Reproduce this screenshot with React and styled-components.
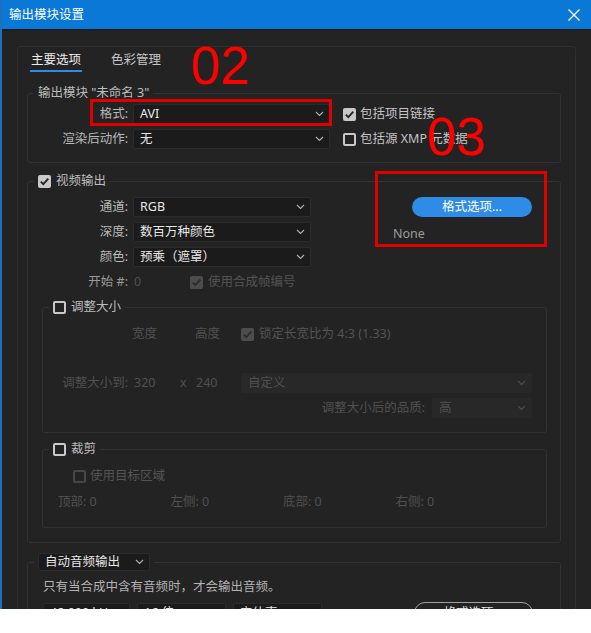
import React from 'react';
import styled, { createGlobalStyle } from 'styled-components';

const GlobalStyle = createGlobalStyle`
  html, body {
    margin: 0;
    padding: 0;
    background: #ffffff;
  }
  body {
    font-family: "Noto Sans", "Noto Sans CJK SC", sans-serif;
  }
  * {
    box-sizing: border-box;
  }
`;

const Window = styled.div`
  width: 591px;
  height: 609px;
  overflow: hidden;
  background: #232323;
  border-left: 2px solid #1f6fbf;
  display: flex;
  flex-direction: column;
  color: #bababa;
  font-size: 12.5px;
  line-height: 16px;
`;

const TitleBar = styled.div`
  height: 31px;
  flex-shrink: 0;
  background: #0a78d7;
  border-bottom: 2px solid #1b1b1b;
  display: flex;
  align-items: center;
  justify-content: space-between;
  padding: 0 11px 0 7px;
  color: #ffffff;
`;

const Body = styled.div`
  position: relative;
  flex: 1;
  padding: 15px 15px 0 15px;
`;

const Panel = styled.div`
  border: 1px solid #303030;
  border-radius: 3px;
  padding: 0 14px 0 9px;
`;

const TabBar = styled.div`
  display: flex;
  gap: 28px;
  padding-left: 3px;
`;

const Tab = styled.div`
  padding: 5px 1px 2px;
  border-bottom: 2px solid ${(p) => (p.$active ? '#2d8ceb' : 'transparent')};
  color: ${(p) => (p.$active ? '#ececec' : '#c6c6c6')};
`;

const Group = styled.fieldset`
  margin: ${(p) => p.$mt || 0}px 0 0;
  padding: 0;
  border: 1px solid #323232;
  border-radius: 3px;
  min-width: 0;
`;

const Legend = styled.legend`
  margin-left: 6px;
  padding: 0 4px;
`;

const LegendInner = styled.span`
  display: flex;
  align-items: center;
  gap: 5px;
  height: ${(p) => p.$h || 16}px;
  color: #bdbdbd;
`;

const Select = styled.div`
  height: ${(p) => p.$h || 20}px;
  width: ${(p) => (p.$w ? `${p.$w}px` : 'auto')};
  background: ${(p) => (p.$disabled ? '#282828' : '#1b1b1b')};
  border: 1px solid ${(p) => (p.$disabled ? '#282828' : '#2b2b2b')};
  border-radius: 2px;
  display: flex;
  align-items: center;
  justify-content: space-between;
  padding: 0 5px 0 6px;
  color: ${(p) => (p.$disabled ? '#505050' : '#e6e6e6')};
  white-space: nowrap;
`;

const ModuleGrid = styled.div`
  position: relative;
  display: grid;
  grid-template-columns: 105px 197px 1fr;
  grid-auto-rows: 20px;
  row-gap: 5px;
  padding: 3px 0 13px;
  align-items: center;
`;

const Label = styled.span`
  text-align: right;
  padding-right: 5px;
  color: ${(p) => p.$color || '#b9b9b9'};
  white-space: nowrap;
`;

const CheckCell = styled.div`
  padding-left: 13px;
`;

const CheckRow = styled.label`
  display: flex;
  align-items: center;
  gap: ${(p) => p.$gap || 4}px;
  color: ${(p) => (p.$disabled ? '#535353' : '#c4c4c4')};
  white-space: nowrap;
`;

const Box = styled.span`
  width: 13px;
  height: 13px;
  border-radius: 2px;
  flex-shrink: 0;
  display: inline-flex;
  align-items: center;
  justify-content: center;
  background: ${(p) => (p.$checked ? (p.$disabled ? '#4c4c4c' : '#c9c9c9') : 'transparent')};
  border: ${(p) => (p.$checked ? 'none' : `2px solid ${p.$disabled ? '#474747' : '#c9c9c9'}`)};
`;

const RedBox = styled.div`
  position: absolute;
  border: 3px solid #e00000;
  pointer-events: none;
`;

const BigNumber = styled.div`
  position: absolute;
  font-family: "Liberation Sans", Arial, sans-serif;
  font-size: 53px;
  line-height: 53px;
  color: #ff0000;
  pointer-events: none;
`;

const VideoTop = styled.div`
  display: flex;
  padding-top: 8px;
`;

const VideoForm = styled.div`
  display: grid;
  grid-template-columns: 105px 178px;
  grid-auto-rows: 20px;
  row-gap: 5px;
  align-items: center;
`;

const StartCell = styled.div`
  display: flex;
  align-items: center;
`;

const DimValue = styled.span`
  width: ${(p) => (p.$w ? `${p.$w}px` : 'auto')};
  padding-left: ${(p) => p.$pl || 0}px;
  text-align: ${(p) => (p.$right ? 'right' : 'left')};
  color: #505050;
  white-space: nowrap;
`;

const OptionsCol = styled.div`
  position: relative;
  flex: 1;
  display: flex;
  flex-direction: column;
  align-items: flex-start;
  padding-left: 82px;
`;

const BlueButton = styled.div`
  margin-left: 19px;
  width: 120px;
  height: 20px;
  border-radius: 10px;
  background: #2e8ce6;
  color: #ffffff;
  display: flex;
  align-items: center;
  justify-content: center;
`;

const NoneText = styled.span`
  margin-top: 9px;
  color: #9c9c9c;
`;

const SubGroups = styled.div`
  padding: 0 13px 14px 14px;
`;

const HeaderRow = styled.div`
  display: flex;
  align-items: center;
  height: 16px;
  margin-top: 11px;
  padding-left: 89px;
`;

const SizeRow = styled.div`
  display: flex;
  align-items: center;
  height: 20px;
  margin-top: 31px;
`;

const QualityRow = styled.div`
  display: flex;
  align-items: center;
  justify-content: flex-end;
  gap: 7px;
  height: 20px;
  margin-top: 5px;
  padding: 0 14px 14px 0;
  box-sizing: content-box;
`;

const CropContent = styled.div`
  padding: 11px 0 17px 0;
`;

const TargetRow = styled.div`
  padding-left: 30px;
  height: 16px;
  display: flex;
  align-items: center;
`;

const MarginRow = styled.div`
  display: grid;
  grid-template-columns: repeat(4, 112.5px);
  padding-left: 15px;
  margin-top: 10px;
  height: 16px;
  align-items: center;
  color: #505050;
`;

const AudioContent = styled.div`
  padding: 8px 0 0 15px;
`;

const AudioNote = styled.div`
  color: #b2b2b2;
`;

const AudioRow = styled.div`
  display: flex;
  align-items: flex-start;
  gap: 7px;
  margin-top: 8px;
  height: 40px;
`;

const OutlineButton = styled.div`
  margin-left: 85px;
  width: 119px;
  height: 22px;
  margin-top: -1px;
  border: 1.5px solid #a0a0a0;
  border-radius: 11px;
  color: #dcdcdc;
  display: flex;
  align-items: center;
  justify-content: center;
`;

const Chevron = ({ color = '#b0b0b0' }) => (
  <svg width="9" height="6" viewBox="0 0 9 6">
    <path d="M1 1 L4.5 4.5 L8 1" fill="none" stroke={color} strokeWidth="1.1" />
  </svg>
);

const CloseIcon = () => (
  <svg width="12" height="12" viewBox="0 0 12 12">
    <path d="M0.5 0.5 L11.5 11.5 M11.5 0.5 L0.5 11.5" stroke="#ffffff" strokeWidth="1.3" />
  </svg>
);

const CheckBox = ({ checked, disabled }) => (
  <Box $checked={checked} $disabled={disabled}>
    {checked && (
      <svg width="11" height="11" viewBox="0 0 11 11">
        <path
          d="M1.8 5.6 L4.3 8.1 L9.3 2.6"
          fill="none"
          stroke={disabled ? '#2b2b2b' : '#262626'}
          strokeWidth="1.9"
        />
      </svg>
    )}
  </Box>
);

const Dropdown = ({ value, w, h, disabled }) => (
  <Select $w={w} $h={h} $disabled={disabled}>
    <span>{value}</span>
    <Chevron color={disabled ? '#4e4e4e' : '#b0b0b0'} />
  </Select>
);

const App = () => {
  return (
    <>
      <GlobalStyle />
      <Window>
        <TitleBar>
          <span>输出模块设置</span>
          <CloseIcon />
        </TitleBar>
        <Body>
          <Panel>
            <TabBar>
              <Tab $active>主要选项</Tab>
              <Tab>色彩管理</Tab>
            </TabBar>

            <Group $mt={13}>
              <Legend>
                <LegendInner>输出模块 "未命名 3"</LegendInner>
              </Legend>
              <ModuleGrid>
                <Label>格式:</Label>
                <Dropdown value="AVI" />
                <CheckCell>
                  <CheckRow>
                    <CheckBox checked />
                    包括项目链接
                  </CheckRow>
                </CheckCell>
                <Label>渲染后动作:</Label>
                <Dropdown value="无" />
                <CheckCell>
                  <CheckRow>
                    <CheckBox />
                    包括源 XMP 元数据
                  </CheckRow>
                </CheckCell>
                <RedBox style={{ left: 62, top: -2, width: 242, height: 27 }} />
              </ModuleGrid>
            </Group>

            <Group $mt={10}>
              <Legend>
                <LegendInner>
                  <CheckBox checked />
                  视频输出
                </LegendInner>
              </Legend>
              <VideoTop>
                <VideoForm>
                  <Label>通道:</Label>
                  <Dropdown value="RGB" />
                  <Label>深度:</Label>
                  <Dropdown value="数百万种颜色" />
                  <Label>颜色:</Label>
                  <Dropdown value="预乘（遮罩）" />
                  <Label $color="#9a9a9a">开始 #:</Label>
                  <StartCell>
                    <DimValue $w={57} $pl={1}>0</DimValue>
                    <CheckRow $disabled $gap={5}>
                      <CheckBox checked disabled />
                      使用合成帧编号
                    </CheckRow>
                  </StartCell>
                </VideoForm>
                <OptionsCol>
                  <BlueButton>格式选项...</BlueButton>
                  <NoneText>None</NoneText>
                  <RedBox style={{ left: 64, top: -26, width: 172, height: 76 }} />
                </OptionsCol>
              </VideoTop>

              <SubGroups>
                <Group $mt={7}>
                  <Legend>
                    <LegendInner>
                      <CheckBox />
                      调整大小
                    </LegendInner>
                  </Legend>
                  <HeaderRow>
                    <DimValue $w={63}>宽度</DimValue>
                    <DimValue $w={46}>高度</DimValue>
                    <CheckRow $disabled $gap={5}>
                      <CheckBox checked disabled />
                      锁定长宽比为 4:3 (1.33)
                    </CheckRow>
                  </HeaderRow>
                  <SizeRow>
                    <DimValue $w={85} $right>调整大小到:</DimValue>
                    <DimValue $w={52} $pl={6}>320</DimValue>
                    <DimValue $w={16}>x</DimValue>
                    <DimValue $w={45}>240</DimValue>
                    <Dropdown value="自定义" w={291} disabled />
                  </SizeRow>
                  <QualityRow>
                    <DimValue>调整大小后的品质:</DimValue>
                    <Dropdown value="高" w={100} disabled />
                  </QualityRow>
                </Group>

                <Group $mt={8}>
                  <Legend>
                    <LegendInner>
                      <CheckBox />
                      裁剪
                    </LegendInner>
                  </Legend>
                  <CropContent>
                    <TargetRow>
                      <CheckRow $disabled $gap={4}>
                        <CheckBox disabled />
                        使用目标区域
                      </CheckRow>
                    </TargetRow>
                    <MarginRow>
                      <span>顶部: 0</span>
                      <span>左侧: 0</span>
                      <span>底部: 0</span>
                      <span>右侧: 0</span>
                    </MarginRow>
                  </CropContent>
                </Group>
              </SubGroups>
            </Group>

            <Group $mt={10}>
              <Legend>
                <LegendInner $h={18}>
                  <Dropdown value="自动音频输出" w={112} h={18} />
                </LegendInner>
              </Legend>
              <AudioContent>
                <AudioNote>只有当合成中含有音频时，才会输出音频。</AudioNote>
                <AudioRow>
                  <Dropdown value="48.000 kHz" w={87} />
                  <Dropdown value="16 位" w={89} />
                  <Dropdown value="立体声" w={89} />
                  <OutlineButton>格式选项...</OutlineButton>
                </AudioRow>
              </AudioContent>
            </Group>
          </Panel>
          <BigNumber style={{ left: 189, top: 8 }}>02</BigNumber>
          <BigNumber style={{ left: 425, top: 79 }}>03</BigNumber>
        </Body>
      </Window>
    </>
  );
};

export default App;
